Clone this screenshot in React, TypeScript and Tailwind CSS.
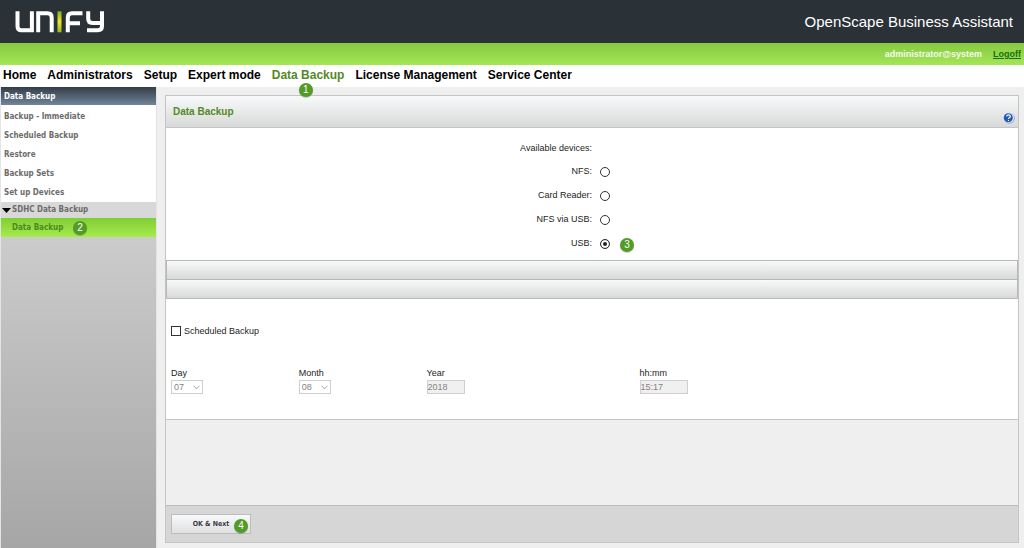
import { useState } from "react";
import type { ReactNode } from "react";

const navItems = [
  "Home",
  "Administrators",
  "Setup",
  "Expert mode",
  "Data Backup",
  "License Management",
  "Service Center",
];

const sideItems = [
  "Backup - Immediate",
  "Scheduled Backup",
  "Restore",
  "Backup Sets",
  "Set up Devices",
];

const devices = ["NFS", "Card Reader", "NFS via USB", "USB"];

function Badge({ n, className }: { n: number; className: string }) {
  return (
    <span
      className={`absolute z-10 flex size-[14px] items-center justify-center rounded-full bg-[#529b25] font-['Liberation_Sans',sans-serif] text-[10px] leading-none font-normal text-white shadow-[0_1px_1px_#0003] ${className}`}
    >
      {n}
    </span>
  );
}

function Logo() {
  return (
    <svg
      width="90"
      height="22"
      viewBox="0 0 90 22"
      fill="none"
      stroke="#fff"
      strokeWidth="4"
      role="img"
      aria-label="Unify"
    >
      <defs>
        <linearGradient id="bar" x1="0" y1="0" x2="0" y2="1">
          <stop offset="0" stopColor="#7fae2c" />
          <stop offset="0.5" stopColor="#f0e62a" />
          <stop offset="1" stopColor="#8dbb2d" />
        </linearGradient>
      </defs>
      <path d="M2.5 0.3V15.3Q2.5 19.3 6.5 19.3H16.9V0.3" />
      <path d="M23.2 21.3V2.3H32.5Q36.7 2.3 36.7 6.5V21.3" />
      <rect x="42.5" y="0.3" width="4" height="21" fill="url(#bar)" stroke="none" />
      <path d="M52.8 21.3V6.5Q52.8 2.3 57 2.3H67.5M53 12.2H65" />
      <path d="M73.2 0.3V7.8Q73.2 12 77.4 12H87M87 0.3V15.1Q87 19.3 82.8 19.3H72" />
    </svg>
  );
}

function HelpIcon() {
  return (
    <svg width="12" height="12" viewBox="0 0 12 12" aria-hidden="true">
      <circle cx="6.4" cy="6.3" r="5.4" fill="#8fa9dc" />
      <circle cx="6" cy="6" r="4.9" fill="#dfe9fa" />
      <circle cx="5.3" cy="5.8" r="4.5" fill="#2455b8" />
      <path
        d="M3.6 4.5Q3.8 2.9 5.5 2.9T7.3 4.4Q7.3 5.3 6.2 5.8Q5.5 6.2 5.5 7M5.5 8V9.1"
        fill="none"
        stroke="#fff"
        strokeWidth="1.2"
      />
    </svg>
  );
}

function Field({ id, label, children }: { id: string; label: string; children: ReactNode }) {
  return (
    <div className="flex flex-col items-start pl-[5px]">
      <label htmlFor={id} className="leading-[14px]">
        {label}
      </label>
      {children}
    </div>
  );
}

function SmallSelect({ id, value }: { id: string; value: string }) {
  return (
    <div className="relative">
      <select
        id={id}
        disabled
        defaultValue={value}
        className="block h-[14px] w-8 appearance-none border border-[#cfcfcf] bg-white pl-[2px] text-[9px] leading-[12px] text-[#838383] opacity-100"
      >
        <option>{value}</option>
      </select>
      <svg
        className="pointer-events-none absolute top-[5px] right-[3px]"
        width="7"
        height="5"
        viewBox="0 0 7 5"
        fill="none"
        stroke="#a5a5a5"
        aria-hidden="true"
      >
        <path d="M0.5 0.8L3.5 3.8L6.5 0.8" />
      </svg>
    </div>
  );
}

const inputClass =
  "block h-[14px] border border-[#cfcfcf] bg-[#f0f0f0] text-[9px] leading-[12px] text-[#838383]";

export default function App() {
  const [device, setDevice] = useState("USB");
  const [scheduled, setScheduled] = useState(false);

  return (
    <div className="flex min-h-screen flex-col bg-[#efefef] font-['Liberation_Sans',Arial,sans-serif] text-[9px] text-[#1c1c24]">
      <header>
        <div className="flex h-[43px] items-center justify-between bg-[#2a3137] pr-[11px] pl-[15px]">
          <Logo />
          <h1 className="text-[15px] leading-5 text-white">OpenScape Business Assistant</h1>
        </div>
        <div className="flex h-[22px] items-center justify-end gap-[11px] bg-linear-to-b from-[#85c940] to-[#a5e657] pt-px pr-[3px] text-[9px] font-bold">
          <span className="text-[#f4fbe9]">administrator@system</span>
          <a href="#logoff" className="text-[#16700a] underline">
            Logoff
          </a>
        </div>
        <nav className="flex h-[22px] items-center gap-[11px] bg-white px-[3px] pb-[2px] text-[12px] leading-5 font-bold text-black">
          {navItems.map((item) => (
            <a
              key={item}
              href="#nav"
              className={item === "Data Backup" ? "relative text-[#528a27]" : ""}
            >
              {item}
              {item === "Data Backup" && <Badge n={1} className="top-[18px] left-[27px]" />}
            </a>
          ))}
        </nav>
      </header>

      <div className="flex flex-1">
        <aside className="w-[157px] shrink-0 border-x border-[#e4e4e4] bg-linear-to-b from-[#dedede] to-[#a6a6a6] font-['DejaVu_Sans_Condensed','DejaVu_Sans',sans-serif] text-[8px] font-bold text-[#6c6c6c]">
          <h2 className="flex h-[18px] items-center bg-linear-to-b from-[#343e48] to-[#71859a] pt-px pl-[3px] text-white">
            Data Backup
          </h2>
          <ul className="bg-white pt-[2px]">
            {sideItems.map((item) => (
              <li key={item} className="flex h-[19px] items-center pl-[3px]">
                <a href="#side">{item}</a>
              </li>
            ))}
          </ul>
          <div className="flex h-4 items-center gap-px bg-[#d8d8d8] pl-px">
            <svg width="9" height="5" viewBox="0 0 9 5" aria-hidden="true">
              <path d="M0 0H9L4.5 5Z" fill="#000" />
            </svg>
            <span>SDHC Data Backup</span>
          </div>
          <div className="flex h-[19px] items-center bg-linear-to-b from-[#80cd35] to-[#a5ec4c] pt-px pl-[11px]">
            <a href="#sdhc" className="relative text-[#4b8a20]">
              Data Backup
              <Badge n={2} className="-top-px left-[61px]" />
            </a>
          </div>
        </aside>

        <main className="flex flex-1 flex-col pt-2 pr-[5px] pb-[5px] pl-2">
          <section className="flex flex-1 flex-col border border-[#c4c4c4] bg-white">
            <div className="flex h-8 items-center justify-between border-b border-[#c4c4c4] bg-linear-to-b from-[#f8f9fa] to-[#d8dad9] pr-[3px] pl-[7px]">
              <h2 className="text-[10px] font-bold text-[#528a27]">Data Backup</h2>
              <button type="button" aria-label="Help" className="mt-3">
                <HelpIcon />
              </button>
            </div>

            <fieldset className="pt-[10px] pb-1">
              <div className="grid h-[22px] grid-cols-2 items-center">
                <span className="text-right">Available devices:</span>
              </div>
              {devices.map((name) => (
                <label key={name} className="grid h-6 grid-cols-2 items-center">
                  <span className="text-right">{name}:</span>
                  <span className="relative flex">
                    <input
                      type="radio"
                      name="device"
                      checked={device === name}
                      onChange={() => setDevice(name)}
                      className="ml-2 size-[10px] appearance-none rounded-full border border-[#333] bg-white checked:bg-[#222] checked:shadow-[inset_0_0_0_2px_#fff]"
                    />
                    {name === "USB" && <Badge n={3} className="-top-px left-7" />}
                  </span>
                </label>
              ))}
            </fieldset>

            <div className="h-5 border border-[#b8b8b8] bg-linear-to-b from-[#f8f9fa] to-[#d8dad9]" />
            <div className="h-[19px] border border-t-0 border-[#b8b8b8] bg-linear-to-b from-[#f8f9fa] to-[#d8dad9]" />

            <div className="border-b border-[#c4c4c4] py-[25px]">
              <label className="flex items-center gap-[3px] pl-[5px] leading-[14px]">
                <input
                  type="checkbox"
                  checked={scheduled}
                  onChange={() => setScheduled(!scheduled)}
                  className="size-[10px] appearance-none border border-[#333] bg-white checked:bg-[#333]"
                />
                Scheduled Backup
              </label>
              <div className="mt-7 grid grid-cols-[15%_15%_25%_1fr]">
                <Field id="day" label="Day">
                  <SmallSelect id="day" value="07" />
                </Field>
                <Field id="month" label="Month">
                  <SmallSelect id="month" value="08" />
                </Field>
                <Field id="year" label="Year">
                  <input id="year" disabled defaultValue="2018" className={`${inputClass} w-[38px]`} />
                </Field>
                <Field id="time" label="hh:mm">
                  <input id="time" disabled defaultValue="15:17" className={`${inputClass} w-12`} />
                </Field>
              </div>
            </div>

            <div className="min-h-10 flex-1 bg-[#efefef]" />

            <div className="border-t border-[#bcbcbc] bg-[#d6d6d6] px-[5px] py-2">
              <button
                type="button"
                className="relative flex h-5 w-20 items-center justify-center border border-[#bdbdbd] bg-linear-to-b from-[#f8f9fa] to-[#dfe1e1] font-['DejaVu_Sans_Condensed','DejaVu_Sans',sans-serif] text-[7px] font-bold text-[#3c3c44]"
              >
                OK &amp; Next
                <Badge n={4} className="top-1 right-[2px]" />
              </button>
            </div>
          </section>
        </main>
      </div>
    </div>
  );
}
